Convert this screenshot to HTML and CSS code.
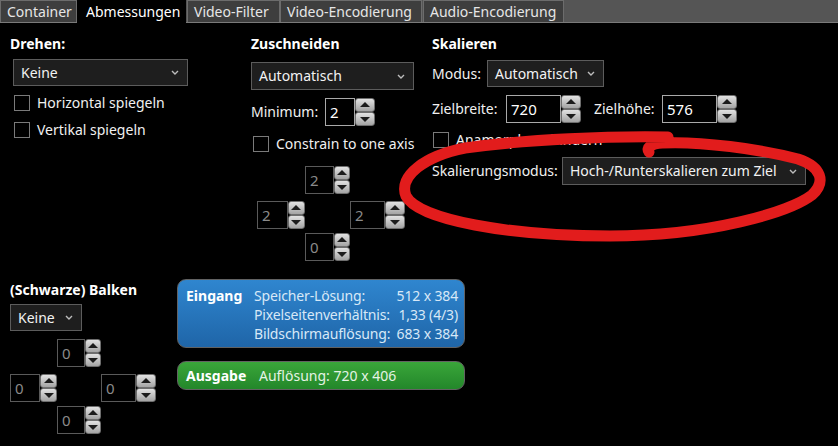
FILE: index.html
```html
<!DOCTYPE html>
<html lang="de">
<head>
<meta charset="utf-8">
<title>Abmessungen</title>
<link rel="stylesheet" href="styles.css">
</head>
<body>
<nav class="tabs">
  <div class="tab tab-container">Container</div>
  <div class="tab tab-active">Abmessungen</div>
  <div class="tab tab-filter">Video-Filter</div>
  <div class="tab tab-venc">Video-Encodierung</div>
  <div class="tab tab-aenc">Audio-Encodierung</div>
  <div class="tab-fill"></div>
</nav>

<main class="content">
  <section class="top">
    <div class="col col-rotate">
      <h3 class="heading">Drehen:</h3>
      <div class="select sel-rotate"><span>Keine</span><svg class="chev" viewBox="0 0 8 5"><polyline points="1,1 4,4 7,1"/></svg></div>
      <label class="check check-first"><span class="box"></span>Horizontal spiegeln</label>
      <label class="check check-second"><span class="box"></span>Vertikal spiegeln</label>
    </div>

    <div class="col col-crop">
      <h3 class="heading">Zuschneiden</h3>
      <div class="select sel-crop"><span>Automatisch</span><svg class="chev" viewBox="0 0 8 5"><polyline points="1,1 4,4 7,1"/></svg></div>
      <div class="row row-min">
        <span class="lbl lbl-min">Minimum:</span>
        <div class="spin spin-min"><div class="spin-input">2</div><div class="spin-btns"><span class="btn up"></span><span class="btn down"></span></div></div>
      </div>
      <label class="check check-axis"><span class="box"></span>Constrain to one axis</label>
      <div class="cross cross-crop">
        <div class="spin dim c-top"><div class="spin-input">2</div><div class="spin-btns"><span class="btn up"></span><span class="btn down"></span></div></div>
        <div class="spin dim c-left"><div class="spin-input">2</div><div class="spin-btns"><span class="btn up"></span><span class="btn down"></span></div></div>
        <div class="spin dim c-right"><div class="spin-input">2</div><div class="spin-btns"><span class="btn up"></span><span class="btn down"></span></div></div>
        <div class="spin dim c-bottom"><div class="spin-input">0</div><div class="spin-btns"><span class="btn up"></span><span class="btn down"></span></div></div>
      </div>
    </div>

    <div class="col col-scale">
      <h3 class="heading">Skalieren</h3>
      <div class="row row-mode">
        <span class="lbl lbl-mode">Modus:</span>
        <div class="select sel-mode"><span>Automatisch</span><svg class="chev" viewBox="0 0 8 5"><polyline points="1,1 4,4 7,1"/></svg></div>
      </div>
      <div class="row row-size">
        <span class="lbl lbl-w">Zielbreite:</span>
        <div class="spin spin-wide"><div class="spin-input">720</div><div class="spin-btns"><span class="btn up"></span><span class="btn down"></span></div></div>
        <span class="lbl lbl-h">Zielhöhe:</span>
        <div class="spin spin-wide"><div class="spin-input">576</div><div class="spin-btns"><span class="btn up"></span><span class="btn down"></span></div></div>
      </div>
      <label class="check check-anam"><span class="box"></span>Anamorph verhindern</label>
      <div class="row row-smode">
        <span class="lbl lbl-smode">Skalierungsmodus:</span>
        <div class="select sel-smode"><span>Hoch-/Runterskalieren zum Ziel</span><svg class="chev" viewBox="0 0 8 5"><polyline points="1,1 4,4 7,1"/></svg></div>
      </div>
    </div>
  </section>

  <section class="bottom">
    <div class="col-bars">
      <h3 class="heading">(Schwarze) Balken</h3>
      <div class="select sel-bars"><span>Keine</span><svg class="chev" viewBox="0 0 8 5"><polyline points="1,1 4,4 7,1"/></svg></div>
      <div class="cross cross-bars">
        <div class="spin dim c-top"><div class="spin-input">0</div><div class="spin-btns"><span class="btn up"></span><span class="btn down"></span></div></div>
        <div class="spin dim c-left"><div class="spin-input">0</div><div class="spin-btns"><span class="btn up"></span><span class="btn down"></span></div></div>
        <div class="spin dim c-right"><div class="spin-input">0</div><div class="spin-btns"><span class="btn up"></span><span class="btn down"></span></div></div>
        <div class="spin dim c-bottom"><div class="spin-input">0</div><div class="spin-btns"><span class="btn up"></span><span class="btn down"></span></div></div>
      </div>
    </div>

    <div class="info">
      <div class="box-in">
        <div class="in-title">Eingang</div>
        <div class="in-grid">
          <span class="k">Speicher-Lösung:</span><span class="v">512 x 384</span>
          <span class="k">Pixelseitenverhältnis:</span><span class="v">1,33 (4/3)</span>
          <span class="k">Bildschirmauflösung:</span><span class="v">683 x 384</span>
        </div>
      </div>
      <div class="box-out">
        <span class="out-title">Ausgabe</span>
        <span class="out-text">Auflösung: 720 x 406</span>
      </div>
    </div>
  </section>
</main>

<svg class="annotation" viewBox="0 0 838 446" width="838" height="446">
  <path d="M 668 137 C 610 136, 530 139, 465 148 C 425 156, 398 176, 406 196 C 418 220, 510 236, 610 236 C 710 236, 790 212, 812 195 C 826 182, 822 167, 798 159 C 760 149, 700 141, 662 143 C 650 144, 646 148, 649 152"/>
</svg>
</body>
</html>
```

FILE: styles.css
```css
* { box-sizing: border-box; }

html, body {
  margin: 0;
  padding: 0;
}

body {
  position: relative;
  width: 838px;
  height: 446px;
  overflow: hidden;
  background: #000;
  color: #f0f0f0;
  font-family: "Noto Sans", "Open Sans", sans-serif;
  font-size: 14px;
  line-height: 18px;
}

/* Tabs */
.tabs {
  display: flex;
  height: 23px;
  background: #555;
  border-bottom: 1px solid #7a7a7a;
}

.tab {
  height: 22px;
  padding: 0 6px;
  line-height: 21px;
  background: #3e3e3e;
  border: 1px solid #6c6c6c;
  border-bottom: none;
  color: #e6e6e6;
  white-space: nowrap;
}

.tab-container { width: 77px; }
.tab-active {
  width: 109px;
  height: 23px;
  padding-left: 8px;
  background: #000;
  color: #fff;
  border-color: #000;
  margin-bottom: -1px;
}
.tab-filter { width: 93px; margin-left: 1px; }
.tab-venc { width: 142px; }
.tab-aenc { width: 141px; margin-left: 1px; }
.tab-fill { flex: 1; }

/* Content */
.content {
  padding: 12px 0 0 10px;
}

.top {
  display: grid;
  grid-template-columns: 241px 181px 1fr;
  height: 244px;
}

.col {
  display: flex;
  flex-direction: column;
  align-items: flex-start;
}

.heading {
  margin: 0;
  font-size: 14px;
  font-weight: bold;
  line-height: 18px;
  color: #fff;
}

/* Select */
.select {
  display: flex;
  align-items: center;
  justify-content: space-between;
  background: #1e1e1e;
  border: 1px solid #5c5c5c;
  padding: 0 8px 0 7px;
  color: #f2f2f2;
  white-space: nowrap;
}

.chev {
  width: 8px;
  height: 5px;
  fill: none;
  stroke: #bdbdbd;
  stroke-width: 1.4;
}

.sel-rotate { width: 175px; height: 27px; margin: 6px 0 0 3px; }
.sel-crop { width: 163px; height: 28px; margin-top: 9px; }
.sel-mode { width: 117px; height: 27px; }
.sel-smode { width: 244px; height: 28px; }
.sel-bars { width: 72px; height: 27px; margin-top: 5px; }

/* Checkbox */
.check {
  display: flex;
  align-items: center;
  gap: 7px;
  height: 20px;
  color: #f0f0f0;
  white-space: nowrap;
}

.box {
  width: 16px;
  height: 16px;
  border: 1px solid #7a7a7a;
  background: #000;
}

.check-first { margin: 7px 0 0 4px; }
.check-second { margin: 7px 0 0 4px; }
.check-axis { margin: 8px 0 0 2px; }
.check-anam { margin: 7px 0 0 1px; }

/* Rows */
.row {
  display: flex;
  align-items: center;
}

.lbl { white-space: nowrap; color: #f0f0f0; }
.lbl-min { width: 74px; }
.lbl-mode { width: 55px; }
.lbl-w { width: 74px; }
.lbl-h { width: 68px; margin-left: 13px; }
.lbl-smode { width: 130px; }

.row-min { margin-top: 8px; }
.row-mode { margin-top: 7px; }
.row-size { margin-top: 8px; }
.row-smode { margin-top: 7px; }

/* Spinner */
.spin {
  display: flex;
  height: 28px;
}

.spin-input {
  width: 35px;
  height: 28px;
  border: 1px solid #a9a9a9;
  background: #000;
  color: #fff;
  padding-left: 4px;
  line-height: 26px;
  font-size: 15px;
}

.spin-min .spin-input { width: 30px; }
.spin-wide .spin-input { width: 55px; }

.spin.dim .spin-input {
  border-color: #5a5a5a;
  color: #8a8a8a;
}

.spin-btns {
  display: flex;
  flex-direction: column;
  width: 20px;
}

.btn {
  position: relative;
  flex: 1;
  background: linear-gradient(#e2e2e2, #a4a4a4);
  border: 1px solid #6e6e6e;
  border-radius: 3px;
}

.btn::after {
  content: "";
  position: absolute;
  left: 50%;
  top: 50%;
  width: 0;
  height: 0;
  margin-left: -5px;
  border-left: 5px solid transparent;
  border-right: 5px solid transparent;
}

.btn.up::after {
  margin-top: -3px;
  border-bottom: 5px solid #1c1c1c;
}

.btn.down::after {
  margin-top: -2px;
  border-top: 5px solid #1c1c1c;
}

/* Cross layout of four spinners */
.cross {
  display: grid;
  grid-template-rows: 35px 32px 28px;
}

.cross-crop {
  grid-template-columns: 48px 45px 56px;
  margin: 12px 0 0 6px;
}

.cross-bars {
  grid-template-columns: 47px 44px 56px;
  margin-top: 8px;
}

.c-top { grid-column: 2; grid-row: 1; }
.c-left { grid-column: 1; grid-row: 2; }
.c-right { grid-column: 3; grid-row: 2; }
.c-bottom { grid-column: 2; grid-row: 3; }

/* Bottom section */
.bottom {
  display: flex;
}

.col-bars {
  width: 167px;
  padding-top: 2px;
}

.info {
  display: flex;
  flex-direction: column;
  gap: 13px;
  width: 288px;
}

.box-in {
  display: flex;
  height: 69px;
  padding: 6px 6px 0 8px;
  border: 1px solid #626262;
  border-radius: 9px;
  background: linear-gradient(#2f86cf, #1f65a8);
  white-space: nowrap;
}

.in-title {
  width: 68px;
  flex: none;
  font-weight: bold;
  color: #fff;
  line-height: 19px;
}

.in-grid {
  flex: 1;
  display: grid;
  grid-template-columns: auto auto;
  justify-content: space-between;
  grid-auto-rows: 19px;
  line-height: 19px;
  color: #d7e8f7;
  letter-spacing: -0.15px;
}

.in-grid .v { text-align: right; }

.box-out {
  display: flex;
  align-items: center;
  height: 29px;
  padding: 0 8px;
  border: 1px solid #626262;
  border-radius: 9px;
  background: linear-gradient(#3aa63a, #23872a);
  white-space: nowrap;
}

.out-title {
  width: 73px;
  flex: none;
  font-weight: bold;
  color: #fff;
}

.out-text { color: #e4f3e4; }

/* Hand-drawn annotation over the content */
.annotation {
  position: absolute;
  left: 0;
  top: 0;
  pointer-events: none;
}

.annotation path {
  fill: none;
  stroke: #e21c1c;
  stroke-width: 11;
  stroke-linecap: round;
  stroke-linejoin: round;
}
```
